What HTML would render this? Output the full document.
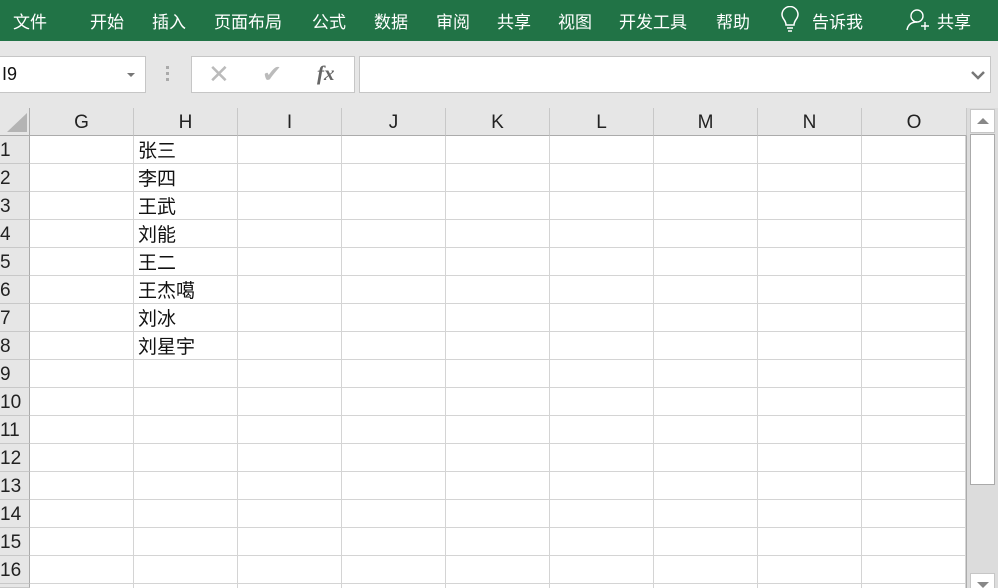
<!DOCTYPE html><html><head><meta charset="utf-8"><style>
*{margin:0;padding:0;box-sizing:border-box}
html,body{width:998px;height:588px;overflow:hidden}
body{background:#e6e6e6;font-family:"Liberation Sans","Noto Sans CJK SC",sans-serif;position:relative}
.top{position:absolute;left:0;top:0;width:998px;height:41px;background:#217346;color:#fff;font-size:17px}
.top span{position:absolute;top:8px}
.box{position:absolute;background:#fff;border:1px solid #c6c6c6}
.ch{position:absolute;top:108px;height:28px;border-right:1px solid #c8c8c8;border-bottom:1px solid #ababab;text-align:center;font-size:19px;line-height:30px;color:#222;background:#e6e6e6}
.rh{position:absolute;left:0;width:30px;height:28px;border-bottom:1px solid #c8c8c8;font-size:19px;line-height:30px;color:#222;background:#e6e6e6;border-right:1px solid #ababab}
.grid{position:absolute;left:30px;top:136px;width:937px;height:452px;background-color:#fff;
background-image:linear-gradient(to right,transparent 103px,#d4d4d4 103px,#d4d4d4 104px),linear-gradient(to bottom,transparent 27px,#d4d4d4 27px,#d4d4d4 28px);background-size:104px 28px;border-right:1px solid #ababab}
.c{position:absolute;left:138px;font-size:19px;color:#111;line-height:30px}
</style></head><body>
<div class="top">
<span style="left:13px">文件</span><span style="left:90px">开始</span><span style="left:152px">插入</span><span style="left:214px">页面布局</span><span style="left:312px">公式</span><span style="left:374px">数据</span><span style="left:436px">审阅</span><span style="left:497px">共享</span><span style="left:558px">视图</span><span style="left:619px">开发工具</span><span style="left:716px">帮助</span>
<svg style="position:absolute;left:779px;top:6px" width="22" height="26" viewBox="0 0 22 26"><path d="M7 19 C7 14 3 13 3 8.5 A8 8 0 0 1 19 8.5 C19 13 15 14 15 19 Z M8 22 H14 M9 25 H13" fill="none" stroke="#fff" stroke-width="1.5"/></svg>
<span style="left:812px">告诉我</span>
<svg style="position:absolute;left:906px;top:8px" width="26" height="24" viewBox="0 0 26 24"><circle cx="11" cy="8" r="6" fill="none" stroke="#fff" stroke-width="1.4"/><path d="M1 22 C2 16 6 14 11 14 M15 18 H23 M19 14 V22" fill="none" stroke="#fff" stroke-width="1.4"/></svg>
<span style="left:937px">共享</span>
</div>
<div class="box" style="left:-2px;top:56px;width:148px;height:37px;font-size:18px;line-height:35px;padding-left:3px;color:#111">I9<span style="position:absolute;left:128px;top:16px;border:4px solid transparent;border-top:4px solid #777"></span></div>
<div style="position:absolute;left:166px;top:66px;width:3px;height:3px;background:#aaa;box-shadow:0 6px #aaa,0 12px #aaa"></div>
<div class="box" style="left:191px;top:56px;width:164px;height:37px">
<span style="position:absolute;left:16px;top:2px;font-size:26px;color:#bbb">✕</span>
<span style="position:absolute;left:70px;top:3px;font-size:24px;color:#bbb">✔</span>
<span style="position:absolute;left:125px;top:4px;font-size:21px;color:#666;font-style:italic;font-family:'Liberation Serif',serif;font-weight:bold">fx</span></div>
<div class="box" style="left:359px;top:56px;width:632px;height:37px"><svg style="position:absolute;right:5px;top:14px" width="14" height="9"><path d="M1 1 L7 7 L13 1" fill="none" stroke="#777" stroke-width="2.5"/></svg></div>
<div style="position:absolute;left:0;top:108px;width:30px;height:28px;border-right:1px solid #ababab;border-bottom:1px solid #ababab"><div style="position:absolute;left:7px;top:5px;border-left:20px solid transparent;border-bottom:19px solid #b4b4b4"></div></div>
<div class="ch" style="left:30px;width:104px">G</div><div class="ch" style="left:134px;width:104px">H</div><div class="ch" style="left:238px;width:104px">I</div><div class="ch" style="left:342px;width:104px">J</div><div class="ch" style="left:446px;width:104px">K</div><div class="ch" style="left:550px;width:104px">L</div><div class="ch" style="left:654px;width:104px">M</div><div class="ch" style="left:758px;width:104px">N</div><div class="ch" style="left:862px;width:105px">O</div>
<div class="grid"></div>
<div class="rh" style="top:136px">1</div><div class="rh" style="top:164px">2</div><div class="rh" style="top:192px">3</div><div class="rh" style="top:220px">4</div><div class="rh" style="top:248px">5</div><div class="rh" style="top:276px">6</div><div class="rh" style="top:304px">7</div><div class="rh" style="top:332px">8</div><div class="rh" style="top:360px">9</div><div class="rh" style="top:388px">10</div><div class="rh" style="top:416px">11</div><div class="rh" style="top:444px">12</div><div class="rh" style="top:472px">13</div><div class="rh" style="top:500px">14</div><div class="rh" style="top:528px">15</div><div class="rh" style="top:556px">16</div><div class="rh" style="top:584px;height:4px"></div>
<div class="c" style="top:137px">张三</div><div class="c" style="top:165px">李四</div><div class="c" style="top:193px">王武</div><div class="c" style="top:221px">刘能</div><div class="c" style="top:249px">王二</div><div class="c" style="top:277px">王杰噶</div><div class="c" style="top:305px">刘冰</div><div class="c" style="top:333px">刘星宇</div>
<div style="position:absolute;left:967px;top:108px;width:31px;height:480px;background:#dcdcdc"></div>
<div style="position:absolute;left:970px;top:109px;width:25px;height:24px;background:#fff;border:1px solid #c6c6c6"><div style="position:absolute;left:6px;top:8px;border:6px solid transparent;border-bottom:6px solid #888;border-top:0"></div></div>
<div style="position:absolute;left:970px;top:134px;width:25px;height:351px;background:#fff;border:1px solid #aaa"></div>
<div style="position:absolute;left:970px;top:573px;width:25px;height:15px;background:#fff;border:1px solid #c6c6c6;border-bottom:0;overflow:hidden"><div style="position:absolute;left:6px;top:8px;border:6px solid transparent;border-top:6px solid #888;border-bottom:0"></div></div>
</body></html>
